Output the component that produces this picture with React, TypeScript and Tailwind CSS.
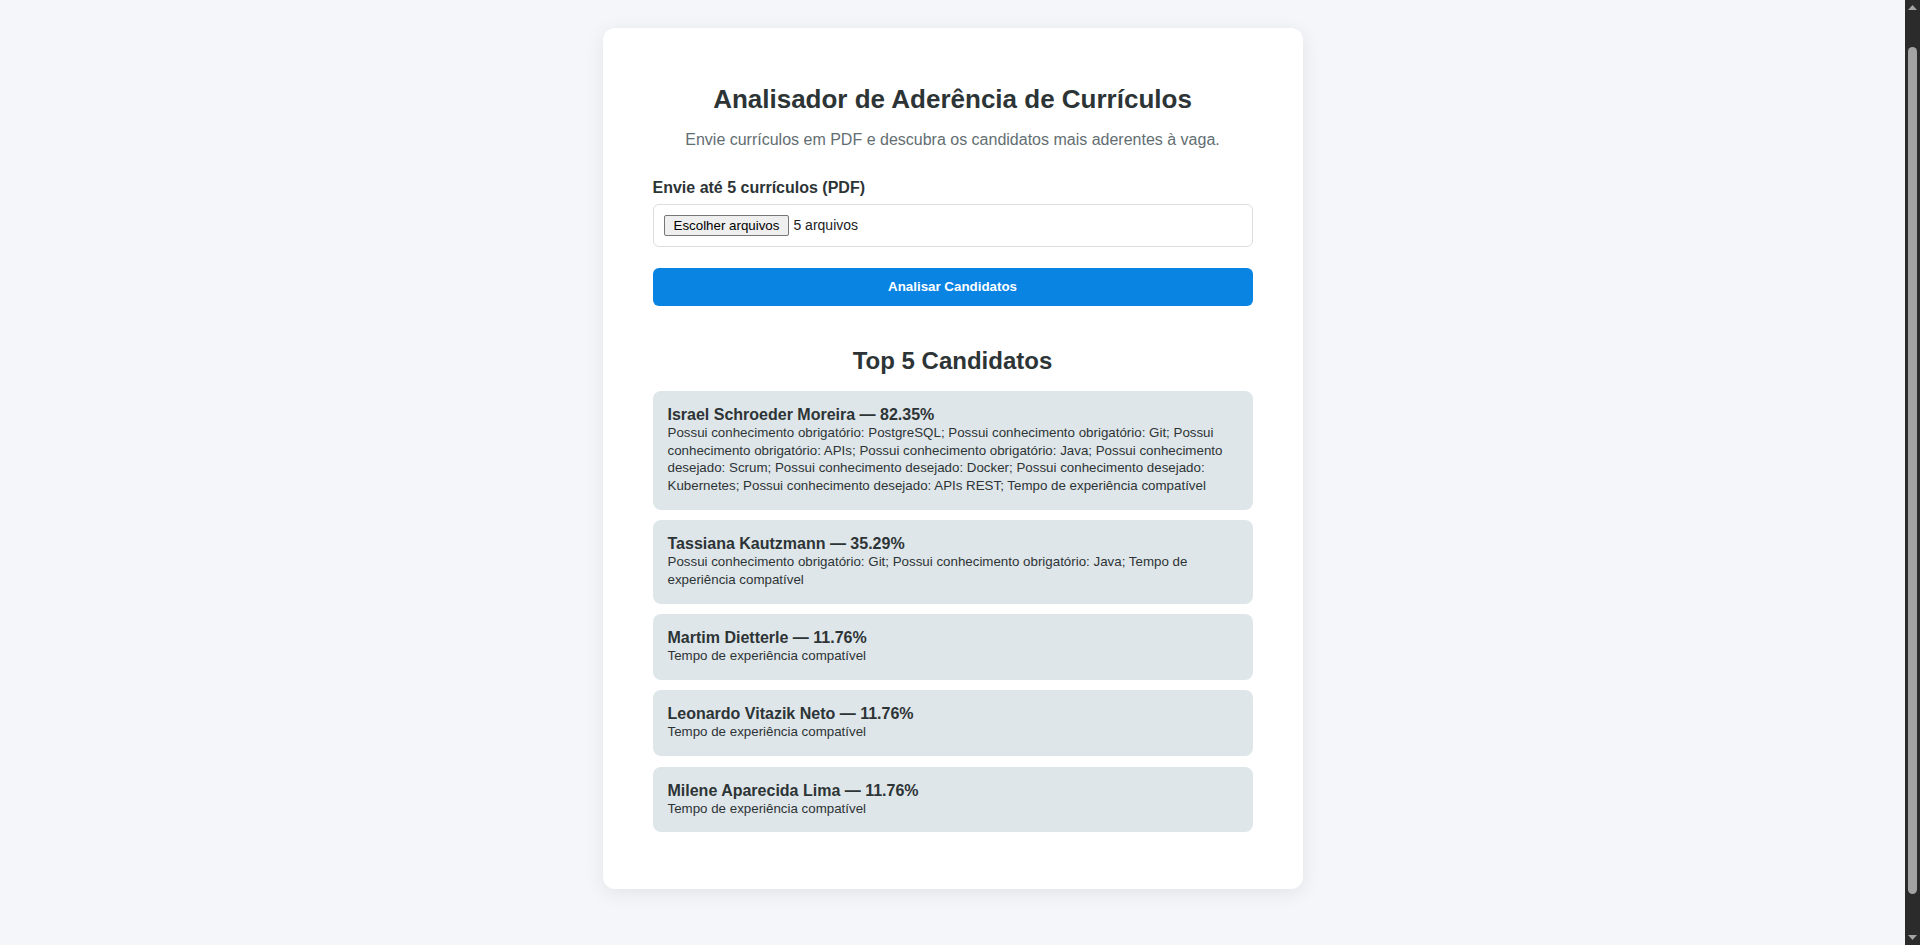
import { useLayoutEffect, useRef } from "react";

const results = [
  {
    name: "Israel Schroeder Moreira",
    score: "82.35%",
    desc: "Possui conhecimento obrigatório: PostgreSQL; Possui conhecimento obrigatório: Git; Possui conhecimento obrigatório: APIs; Possui conhecimento obrigatório: Java; Possui conhecimento desejado: Scrum; Possui conhecimento desejado: Docker; Possui conhecimento desejado: Kubernetes; Possui conhecimento desejado: APIs REST; Tempo de experiência compatível",
  },
  {
    name: "Tassiana Kautzmann",
    score: "35.29%",
    desc: "Possui conhecimento obrigatório: Git; Possui conhecimento obrigatório: Java; Tempo de experiência compatível",
  },
  { name: "Martim Dietterle", score: "11.76%", desc: "Tempo de experiência compatível" },
  { name: "Leonardo Vitazik Neto", score: "11.76%", desc: "Tempo de experiência compatível" },
  { name: "Milene Aparecida Lima", score: "11.76%", desc: "Tempo de experiência compatível" },
];

function ScrollBar() {
  return (
    <div className="flex h-screen w-[15px] shrink-0 flex-col items-center bg-[#2b2b2b]">
      <div className="flex h-[15px] w-full items-center justify-center">
        <svg width="9" height="5" viewBox="0 0 9 5">
          <polygon points="4.5,0 9,5 0,5" fill="#a3a3a3" />
        </svg>
      </div>
      <div className="flex w-full flex-1 flex-col items-center">
        <div className="mt-[32px] h-[847px] w-[9px] rounded-full bg-[#a3a3a3]" />
      </div>
      <div className="flex h-[15px] w-full items-center justify-center">
        <svg width="9" height="5" viewBox="0 0 9 5">
          <polygon points="0,0 9,0 4.5,5" fill="#a3a3a3" />
        </svg>
      </div>
    </div>
  );
}

export default function App() {
  const ref = useRef<HTMLDivElement>(null);
  useLayoutEffect(() => {
    if (ref.current) ref.current.scrollTop = 35;
  }, []);

  return (
    <div className="flex h-screen overflow-hidden bg-[#f5f6fa] font-['Liberation_Sans',Arial,sans-serif]">
      <div
        ref={ref}
        className="h-screen flex-1 overflow-y-scroll [scrollbar-width:none] [&::-webkit-scrollbar]:hidden"
      >
        <div className="pt-[63px] pb-[98px]">
          <main className="mx-auto w-[700px] rounded-xl bg-white px-[50px] pt-[56px] pb-[57px] shadow-[0_4px_20px_rgba(0,0,0,0.08)]">
            <h1 className="text-center text-[26px] font-bold leading-[30px] text-[#2d3436]">
              Analisador de Aderência de Currículos
            </h1>
            <p className="mt-[17px] text-center text-[16px] leading-[18px] text-[#636e72]">
              Envie currículos em PDF e descubra os candidatos mais aderentes à vaga.
            </p>

            <div className="mt-[30px] text-[16px] font-bold leading-[18px] text-[#2d3436]">
              Envie até 5 currículos (PDF)
            </div>
            <div className="mt-[7px] flex h-[43px] items-center rounded-md border border-[#dcdde1] bg-white px-[10px]">
              <span className="flex h-[21px] items-center rounded-[2px] border border-[#767676] bg-[#efefef] px-[9px] text-[13.33px] text-black">
                Escolher arquivos
              </span>
              <span className="ml-[4px] text-[14px] text-[#222]">5 arquivos</span>
            </div>

            <div className="mt-[21px] flex h-[38px] items-center justify-center rounded-md bg-[#0984e3] text-[13.33px] font-bold text-white">
              Analisar Candidatos
            </div>

            <h2 className="mt-[41px] text-center text-[24px] font-bold leading-[28px] text-[#2d3436]">
              Top 5 Candidatos
            </h2>

            <ul className="mt-[16px] flex flex-col gap-[10.5px]">
              {results.map((r) => (
                <li key={r.name} className="rounded-lg bg-[#dfe6e9] p-[15px] text-[#2d3436]">
                  <div className="text-[16px] font-bold leading-[18px]">
                    {r.name} — {r.score}
                  </div>
                  <div className="text-[13.33px] leading-[17.7px]">{r.desc}</div>
                </li>
              ))}
            </ul>
          </main>
        </div>
      </div>
      <ScrollBar />
    </div>
  );
}
